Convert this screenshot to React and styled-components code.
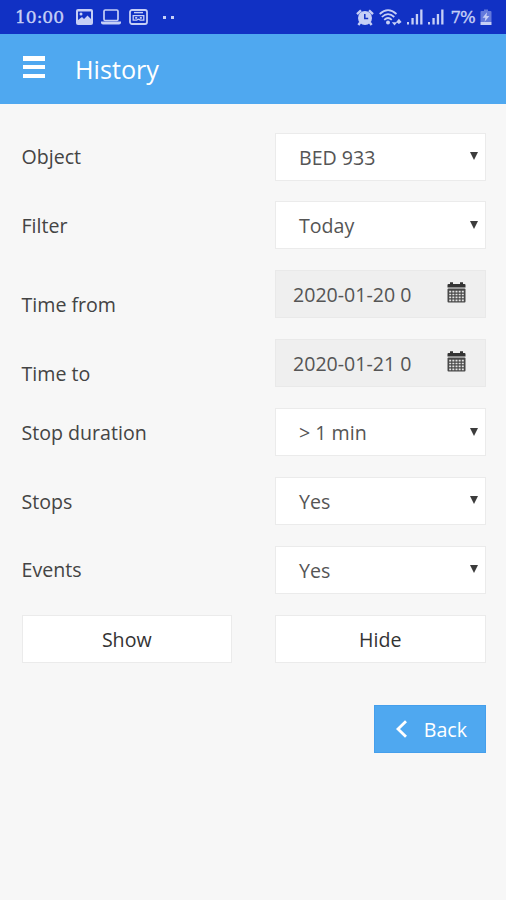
import React from "react";
import styled, { createGlobalStyle } from "styled-components";

const fields = [
  { label: "Object", value: "BED 933", type: "select" },
  { label: "Filter", value: "Today", type: "select" },
  { label: "Time from", value: "2020-01-20 0", type: "date" },
  { label: "Time to", value: "2020-01-21 0", type: "date" },
  { label: "Stop duration", value: "> 1 min", type: "select" },
  { label: "Stops", value: "Yes", type: "select" },
  { label: "Events", value: "Yes", type: "select" },
];

const PictureIcon = () => (
  <svg width="17" height="16" viewBox="0 0 17 16">
    <rect x="0" y="0" width="17" height="16" rx="2" fill="currentColor" />
    <path d="M2 2.5h13v7.5l-3.5-3.5-3.5 3.5-2-2L2 11z" fill="#1131c4" />
    <circle cx="5" cy="5" r="1.5" fill="currentColor" />
  </svg>
);

const LaptopIcon = () => (
  <svg width="20" height="16" viewBox="0 0 20 16">
    <rect x="3" y="1" width="14" height="10.5" rx="1.2" fill="none" stroke="currentColor" strokeWidth="1.7" />
    <path d="M0 12.5h20v1.3q0 1.7-2 1.7H2q-2 0-2-1.7z" fill="currentColor" />
  </svg>
);

const TapeIcon = () => (
  <svg width="19" height="16" viewBox="0 0 19 16" fill="none" stroke="currentColor">
    <rect x="1" y="1" width="17" height="14" rx="2" strokeWidth="1.8" />
    <path d="M5 3.6h9" strokeWidth="1.4" />
    <path d="M4.2 6.6h10.6v4.6h-3.4l-1.9-1-1.9 1H4.2z" strokeWidth="1.3" />
    <path d="M6.2 8.8h2M10.8 8.8h2" strokeWidth="1.7" />
  </svg>
);

const AlarmIcon = () => (
  <svg width="18" height="17" viewBox="0 0 18 17">
    <path d="M1 5.2L5 1.4M17 5.2L13 1.4M4.2 13.5L2.4 16M13.8 13.5l1.8 2.5" stroke="currentColor" strokeWidth="2.4" />
    <circle cx="9" cy="9" r="7" fill="currentColor" />
    <path d="M8.8 5v4.5h3.4" stroke="#1131c4" strokeWidth="1.5" fill="none" />
  </svg>
);

const WifiIcon = () => (
  <svg width="23" height="17" viewBox="0 0 23 17">
    <g fill="none" stroke="currentColor" strokeWidth="1.7">
      <path d="M.7 5Q9-2.6 17.5 5" />
      <path d="M2.8 8Q9 2.2 15.3 8" />
      <path d="M5.2 10.8q3.8-3.6 7.6 0" />
    </g>
    <circle cx="9" cy="13.5" r="2" fill="currentColor" />
    <path d="M12.8 13.2h5.4l-2.7 3.3zM17.2 13l2.7-3.2 2.7 3.2-2.7 2z" fill="currentColor" />
  </svg>
);

const SignalIcon = () => (
  <svg width="16" height="16" viewBox="0 0 16 16" fill="currentColor">
    <rect x="0" y="13" width="2" height="2.5" />
    <rect x="4.4" y="9" width="2.3" height="6.5" />
    <rect x="8.8" y="5" width="2.3" height="10.5" />
    <rect x="13.2" y="0.5" width="2.3" height="15" />
  </svg>
);

const BatteryIcon = () => (
  <svg width="12" height="17" viewBox="0 0 12 17">
    <path d="M4 .5h4V2h2.5q1 0 1 1v10H.5V3q0-1 1-1H4z" fill="#6379dc" />
    <path d="M.5 13h11v3h-11z" fill="currentColor" />
    <path d="M7 3.2L2.6 8.8h2.8l-.8 4L9.4 7H6.5z" fill="currentColor" />
  </svg>
);

const CalendarIcon = () => (
  <svg width="19" height="21" viewBox="0 0 19 21">
    <path d="M3 2V.3h3V2h7V.3h3V2h1.5q1 0 1 1v2.4H.5V3q0-1 1-1z" fill="#333" />
    <rect x=".5" y="6.6" width="18" height="13.9" rx="1" fill="#484848" />
    <path
      d="M2.2 9.6h14.8M2.2 12.5h14.8M2.2 15.4h14.8M2.2 18.3h14.8"
      stroke="#e4e4e4"
      strokeWidth="1.7"
      strokeDasharray="2 1.15"
    />
  </svg>
);

const ChevronIcon = () => (
  <svg width="13" height="18" viewBox="0 0 13 18">
    <path d="M11 1.2L3 9l8 7.8" fill="none" stroke="#fff" strokeWidth="2.8" />
  </svg>
);

const Field = ({ label, value, type }) => {
  const isDate = type === "date";
  return (
    <>
      <Label $low={isDate}>{label}</Label>
      <Control $date={isDate}>
        <span>{value}</span>
        {isDate ? (
          <CalendarIcon />
        ) : (
          <Arrow viewBox="0 0 8 8">
            <path d="M0 0h8L4 8z" />
          </Arrow>
        )}
      </Control>
    </>
  );
};

const App = () => {
  return (
    <Page>
      <GlobalStyle />
      <StatusBar>
        <Clock>10:00</Clock>
        <Notifications>
          <PictureIcon />
          <LaptopIcon />
          <TapeIcon />
        </Notifications>
        <Dots>
          <i />
          <i />
        </Dots>
        <System>
          <AlarmIcon />
          <WifiIcon />
          <SignalIcon />
          <SignalIcon />
          <Percent>7%</Percent>
          <BatteryIcon />
        </System>
      </StatusBar>
      <Header>
        <MenuButton aria-label="Menu">
          <i />
          <i />
          <i />
        </MenuButton>
        <Title>History</Title>
      </Header>
      <Form>
        {fields.map((field) => (
          <Field key={field.label} {...field} />
        ))}
        <Button>Show</Button>
        <Button>Hide</Button>
      </Form>
      <Footer>
        <BackButton>
          <ChevronIcon />
          <span>Back</span>
        </BackButton>
      </Footer>
    </Page>
  );
};

export default App;

const GlobalStyle = createGlobalStyle`
  * {
    box-sizing: border-box;
  }

  body {
    margin: 0;
    background: #f7f7f7;
    font-family: "Open Sans", sans-serif;
  }

  svg {
    display: block;
    flex-shrink: 0;
  }
`;

const Page = styled.div`
  width: 506px;
  height: 900px;
  background: #f7f7f7;
  overflow: hidden;
`;

const StatusBar = styled.div`
  height: 34px;
  padding: 0 14px 0 15px;
  display: flex;
  align-items: center;
  background: #1131c4;
  color: #c6cff6;
`;

const Clock = styled.span`
  width: 61px;
  font: 17px/34px "DejaVu Serif", serif;
  -webkit-text-stroke: 0.4px currentColor;
`;

const Notifications = styled.div`
  display: flex;
  gap: 8px;
`;

const Dots = styled.div`
  display: flex;
  gap: 5px;
  margin-left: 15px;

  i {
    width: 3px;
    height: 3px;
    background: currentColor;
  }
`;

const System = styled.div`
  display: flex;
  align-items: center;
  gap: 5px;
  margin-left: auto;
`;

const Percent = styled.span`
  margin-left: 1px;
  padding-top: 1px;
  font: 16.5px/33px "DejaVu Serif", serif;
  letter-spacing: -0.8px;
  -webkit-text-stroke: 0.4px currentColor;
`;

const Header = styled.header`
  height: 70px;
  padding-left: 23px;
  display: flex;
  align-items: center;
  background: #4fa8f0;
  color: #ffffff;
`;

const MenuButton = styled.button`
  width: 22px;
  height: 22px;
  margin: 0 30px 4px 0;
  padding: 0;
  border: 0;
  background: none;
  display: flex;
  flex-direction: column;
  justify-content: space-between;

  i {
    width: 22px;
    height: 4.5px;
    background: #ffffff;
  }
`;

const Title = styled.h1`
  margin: 0;
  font-size: 25.2px;
  font-weight: 400;
  line-height: 36px;
`;

const Form = styled.div`
  padding: 28.5px 20.5px 0 21.5px;
  display: grid;
  grid-template-columns: 210.5px 210.5px;
  grid-auto-rows: 48px;
  justify-content: space-between;
  row-gap: 20.9px;
`;

const Label = styled.label`
  padding-top: ${(props) => (props.$low ? "10.5px" : "0.6px")};
  font-size: 19.6px;
  line-height: 48px;
  color: #444444;
  white-space: nowrap;
`;

const Control = styled.div`
  padding: ${(props) => (props.$date ? "0 19px 0 17px" : "1px 7px 0 23px")};
  display: flex;
  align-items: center;
  justify-content: space-between;
  border: 1px solid ${(props) => (props.$date ? "#e9e9e9" : "#ebebeb")};
  background: ${(props) => (props.$date ? "#efefef" : "#ffffff")};
  color: #555555;
  font-size: 19.6px;

  svg {
    margin-bottom: ${(props) => (props.$date ? "4px" : "2px")};
  }
`;

const Arrow = styled.svg`
  width: 8px;
  height: 8px;
  fill: #3c3c3c;
`;

const Button = styled.button`
  padding: 2px 0 0;
  border: 1px solid #ebebeb;
  background: #ffffff;
  color: #333333;
  font-family: inherit;
  font-size: 19.6px;
`;

const Footer = styled.div`
  padding: 42.5px 20px 0 0;
  display: flex;
  justify-content: flex-end;
`;

const BackButton = styled.button`
  width: 112px;
  height: 48px;
  padding: 0 18px 0 20px;
  display: flex;
  align-items: center;
  justify-content: space-between;
  border: 1px solid #459fec;
  background: #4fa8f0;
  color: #ffffff;
  font-family: inherit;
  font-size: 19.6px;

  span {
    padding-top: 1px;
  }
`;
